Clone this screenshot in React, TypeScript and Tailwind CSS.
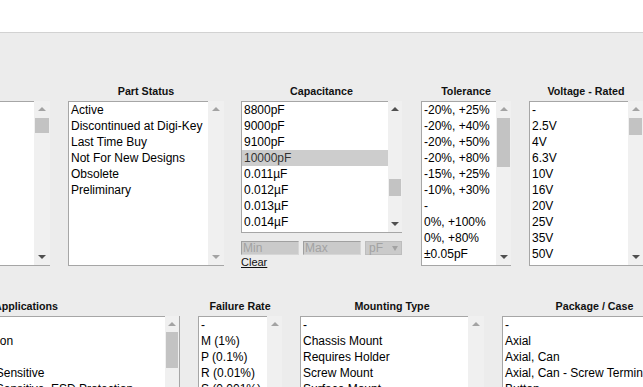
import React from "react";

type Bar = {
  w?: number;
  upOn?: boolean;
  downOn?: boolean;
  thumbTop?: number;
  thumbH?: number;
};

function Arrow({ dir, on }: { dir: "up" | "down"; on?: boolean }) {
  const color = on ? "border-b-[#505050]" : "border-b-[#a3a3a3]";
  const colorDown = on ? "border-t-[#505050]" : "border-t-[#a3a3a3]";
  return dir === "up" ? (
    <div className={`h-0 w-0 border-x-[4px] border-x-transparent border-b-[4px] ${color}`} />
  ) : (
    <div className={`h-0 w-0 border-x-[4px] border-x-transparent border-t-[4px] ${colorDown}`} />
  );
}

function Scrollbar({ w = 15, upOn, downOn, thumbTop, thumbH }: Bar) {
  return (
    <div
      className="flex h-full shrink-0 flex-col border-b border-[#a6a6a6] bg-[#f0f0f0]"
      style={{ width: w }}
    >
      <div className="flex h-[16px] shrink-0 items-center justify-center">
        <Arrow dir="up" on={upOn} />
      </div>
      <div className="flex-1 px-[1px]">
        {thumbH ? (
          <div
            className="bg-[#c3c3c3]"
            style={{ marginTop: thumbTop ?? 0, height: thumbH }}
          />
        ) : null}
      </div>
      <div className="flex h-[17px] shrink-0 items-center justify-center">
        <Arrow dir="down" on={downOn} />
      </div>
    </div>
  );
}

function ListBox({
  title,
  width,
  height = 165,
  items,
  selected,
  bar,
  borderRight,
  className = "",
  children,
}: {
  title?: string;
  width: number;
  height?: number;
  items: string[];
  selected?: string;
  bar: Bar;
  borderRight?: boolean;
  className?: string;
  children?: React.ReactNode;
}) {
  return (
    <div className={`shrink-0 ${className}`} style={{ width }}>
      <div className="mb-[3px] h-[14px] whitespace-nowrap text-center text-[10.7px] font-bold leading-[14px] text-[#111]">
        {title}
      </div>
      <div
        className={`flex ${borderRight ? "border-r border-[#a6a6a6]" : ""}`}
        style={{ height }}
      >
        <div className="min-w-0 flex-1 overflow-hidden border-y border-l border-[#a6a6a6] bg-white">
          {items.map((it, i) => (
            <div
              key={i}
              className={`h-[16px] whitespace-nowrap pl-[2px] text-[12px] leading-[16px] ${
                it === selected ? "bg-[#cdcdcd] text-[#333]" : "text-black"
              }`}
            >
              {it}
            </div>
          ))}
        </div>
        <Scrollbar {...bar} />
      </div>
      {children}
    </div>
  );
}

export default function App() {
  return (
    <div className="h-[387px] w-[643px] overflow-hidden bg-[#ececec] font-['Liberation_Sans',Arial,sans-serif]">
      {/* Header strip */}
      <div className="h-[33px] border-b border-[#d2d2d2] bg-white" />

      {/* Row 1 */}
      <div className="flex h-[182px] items-start pt-0 mt-[51px]">
        <ListBox
          width={250}
          className="-ml-[200px]"
          items={[]}
          bar={{ w: 16, downOn: true, thumbTop: 1, thumbH: 15 }}
        />
        <ListBox
          title="Part Status"
          width={156}
          className="ml-[18px]"
          items={[
            "Active",
            "Discontinued at Digi-Key",
            "Last Time Buy",
            "Not For New Designs",
            "Obsolete",
            "Preliminary",
          ]}
          bar={{ w: 16 }}
        />
        <ListBox
          title="Capacitance"
          width={161}
          height={132}
          className="ml-[17px]"
          items={[
            "8800pF",
            "9000pF",
            "9100pF",
            "10000pF",
            "0.011µF",
            "0.012µF",
            "0.013µF",
            "0.014µF",
          ]}
          selected="10000pF"
          bar={{ w: 14, upOn: true, downOn: true, thumbTop: 62, thumbH: 17 }}
        >
          <div className="mt-[8px] flex h-[14px] gap-[4px]">
            <div className="flex w-[58px] items-center border border-[#a0a0a0] border-b-[#d6d6d6] border-r-[#d6d6d6] bg-[#cacaca] pl-[1px] text-[12px] leading-[12px] text-[#a2a2a2]">
              Min
            </div>
            <div className="flex w-[58px] items-center border border-[#a0a0a0] border-b-[#d6d6d6] border-r-[#d6d6d6] bg-[#cacaca] pl-[1px] text-[12px] leading-[12px] text-[#a2a2a2]">
              Max
            </div>
            <div className="flex w-[37px] items-center justify-between border border-[#bdbdbd] bg-[#cacaca] pl-[3px] pr-[3px] text-[12px] leading-[12px] text-[#a2a2a2]">
              <span>pF</span>
              <span className="h-0 w-0 border-x-[3.5px] border-x-transparent border-t-[5px] border-t-[#a2a2a2]" />
            </div>
          </div>
          <div className="mt-[1px] text-[11px] leading-[13px] text-[#111] underline">
            Clear
          </div>
        </ListBox>
        <ListBox
          title="Tolerance"
          width={90}
          className="ml-[19px]"
          items={[
            "-20%, +25%",
            "-20%, +40%",
            "-20%, +50%",
            "-20%, +80%",
            "-15%, +25%",
            "-10%, +30%",
            "-",
            "0%, +100%",
            "0%, +80%",
            "±0.05pF",
          ]}
          bar={{ w: 15, downOn: true, thumbTop: 1, thumbH: 49 }}
        />
        <ListBox
          title="Voltage - Rated"
          width={114}
          className="ml-[18px]"
          items={["-", "2.5V", "4V", "6.3V", "10V", "16V", "20V", "25V", "35V", "50V"]}
          bar={{ w: 15, downOn: true, thumbTop: 1, thumbH: 17 }}
        />
      </div>

      {/* Row 2 */}
      <div className="mt-[33px] flex items-start">
        <ListBox
          title="Applications"
          width={308}
          className="-ml-[128px]"
          borderRight
          items={[
            "-",
            "Audio, Noise Suppression",
            "Automotive",
            "Automotive; Boardflex Sensitive",
            "Automotive; Boardflex Sensitive, ESD Protection",
          ]}
          bar={{ w: 14, thumbTop: 0, thumbH: 36 }}
        />
        <ListBox
          title="Failure Rate"
          width={84}
          className="ml-[18px]"
          items={["-", "M (1%)", "P (0.1%)", "R (0.01%)", "S (0.001%)"]}
          bar={{ w: 15 }}
        />
        <ListBox
          title="Mounting Type"
          width={184}
          className="ml-[18px]"
          items={["-", "Chassis Mount", "Requires Holder", "Screw Mount", "Surface Mount"]}
          bar={{ w: 16 }}
        />
        <ListBox
          title="Package / Case"
          width={185}
          className="ml-[18px]"
          items={["-", "Axial", "Axial, Can", "Axial, Can - Screw Terminals", "Button"]}
          bar={{ w: 15 }}
        />
      </div>
    </div>
  );
}
